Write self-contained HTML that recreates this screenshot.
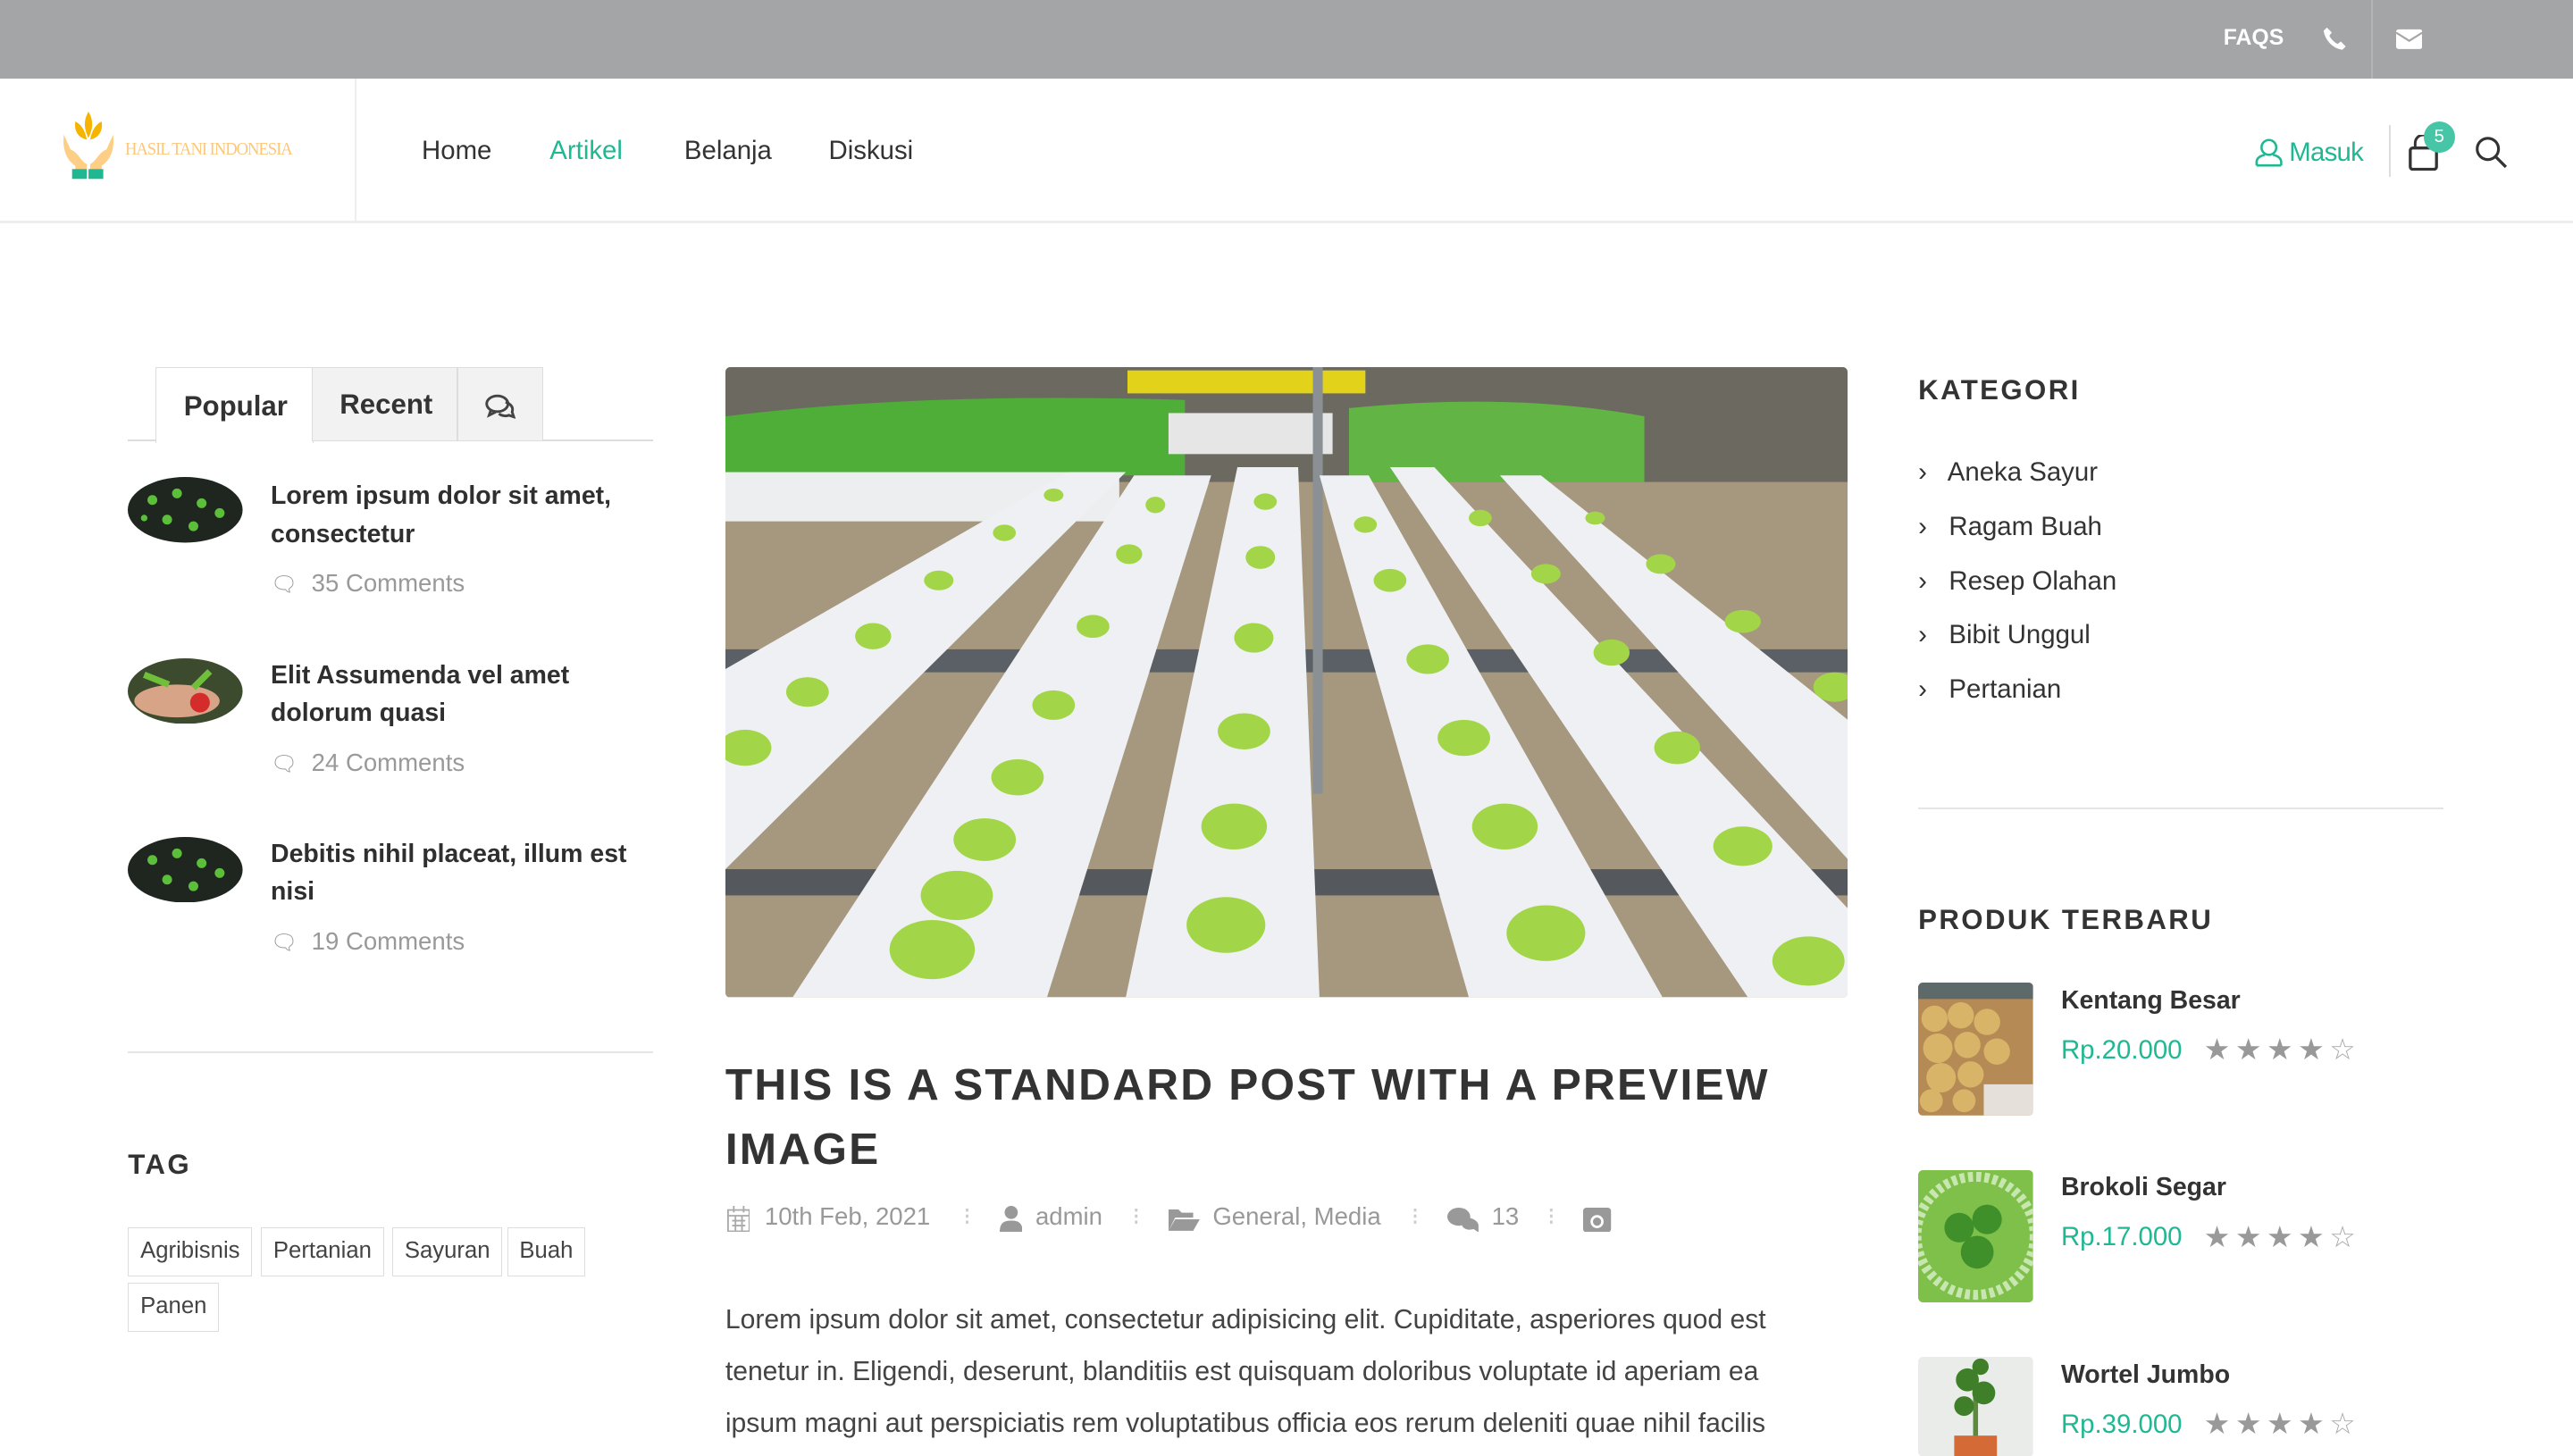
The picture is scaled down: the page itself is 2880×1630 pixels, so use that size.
<!DOCTYPE html>
<html><head><meta charset="utf-8"><style>
*{margin:0;padding:0;box-sizing:border-box}
html,body{width:2880px;height:1630px;overflow:hidden;background:#fff}
#w{zoom:1.836735;width:1568px;height:888px;position:relative;font-family:"Liberation Sans",sans-serif;color:#333}
.a{position:absolute;white-space:nowrap}
.top{left:0;top:0;width:1568px;height:48px;background:#a4a5a7}
.hd{left:0;top:48px;width:1568px;height:88px;border-bottom:2px solid #eee}
.nav{font-size:16px;color:#333;top:83px}
.grn{color:#20b893}
.t16{font-size:15.5px;font-weight:bold;color:#2f2f2f;line-height:23px;white-space:normal;width:235px}
.cm{font-size:15px;color:#999}
.h{font-size:17px;font-weight:bold;letter-spacing:1.3px;color:#333}
.cat{font-size:16px;color:#333}
.tag{border:1px solid #ddd;font-size:14px;color:#444;padding:0 7px;height:30px;line-height:28px}
.pn{font-size:15.5px;font-weight:bold;color:#333}
.pr{font-size:16px;color:#20b893}
.st{font-size:18px;color:#999;letter-spacing:3px}
.meta{font-size:15px;color:#999;top:733px}
</style></head><body><div id="w">
<div class="a top"></div>
<div class="a" style="left:1355px;top:16px;font-size:13.5px;font-weight:bold;color:#fff">FAQS</div>
<svg class="a" style="left:1415px;top:16px" width="16" height="16" viewBox="0 0 16 16"><path d="M3 1l3 3-1.5 2c1 2 3 4 5 5l2-1.5 3 3-2 2C7 14 2 9 1 3z" fill="#fff"/></svg>
<div class="a" style="left:1445px;top:0;width:1px;height:48px;background:#b3b4b6"></div>
<svg class="a" style="left:1460px;top:17px" width="16" height="14" viewBox="0 0 16 14"><rect x="0" y="1" width="16" height="12" rx="1.5" fill="#fff"/><path d="M0 3l8 5 8-5" stroke="#a4a5a7" stroke-width="1.2" fill="none"/></svg>
<div class="a hd"></div>
<div class="a" style="left:216px;top:48px;width:1px;height:88px;background:#eee"></div>
<svg class="a" style="left:36px;top:68px" width="36" height="42" viewBox="0 0 36 42"><path d="M18 0c-3 5-3 10 0 16 3-6 3-11 0-16zM10 6c-1 6 2 10 7 11-1-5-3-9-7-11zM26 6c1 6-2 10-7 11 1-5 3-9 7-11z" fill="#f4b400"/><path d="M3 14c-1 8 1 15 7 19v5h7v-6c-4-2-5-7-10-9zM33 14c1 8-1 15-7 19v5h-7v-6c4-2 5-7 10-9z" fill="#fdcf86"/><rect x="8" y="35" width="9" height="6" fill="#20b893"/><rect x="18" y="35" width="9" height="6" fill="#20b893"/></svg>
<div class="a" style="left:76px;top:85px;font-size:11px;color:#fdc77a;font-family:'Liberation Serif',serif;letter-spacing:-0.6px;transform:scaleX(0.92);transform-origin:left">HASIL TANI INDONESIA</div>
<div class="a nav" style="left:257px">Home</div>
<div class="a nav grn" style="left:335px">Artikel</div>
<div class="a nav" style="left:417px">Belanja</div>
<div class="a nav" style="left:505px">Diskusi</div>
<svg class="a" style="left:1374px;top:84px" width="17" height="18" viewBox="0 0 17 18"><circle cx="8.5" cy="6" r="4.5" fill="none" stroke="#20b893" stroke-width="1.4"/><path d="M1 17v-2c0-3 3-4 5-4.5M16 17v-2c0-3-3-4-5-4.5M1 17h15" fill="none" stroke="#20b893" stroke-width="1.4"/></svg>
<div class="a grn" style="left:1395px;top:84px;font-size:16px;letter-spacing:-0.4px">Masuk</div>
<div class="a" style="left:1456px;top:76px;width:1px;height:32px;background:#ddd"></div>
<svg class="a" style="left:1468px;top:82px" width="18" height="22" viewBox="0 0 18 22"><path d="M4 8V5a5 5 0 0 1 10 0v3" fill="none" stroke="#333" stroke-width="1.6"/><rect x="1" y="8" width="16" height="13" rx="1.5" fill="none" stroke="#333" stroke-width="1.8"/></svg>
<div class="a" style="left:1477px;top:74px;width:19px;height:19px;border-radius:50%;background:#46c6a6;color:#fff;font-size:11px;text-align:center;line-height:19px">5</div>
<svg class="a" style="left:1508px;top:83px" width="20" height="20" viewBox="0 0 20 20"><circle cx="8" cy="8" r="6.5" fill="none" stroke="#333" stroke-width="1.7"/><path d="M13 13l6 6" stroke="#333" stroke-width="1.8"/></svg>

<div class="a" style="left:78px;top:268px;width:320px;height:1px;background:#ddd"></div>
<div class="a" style="left:95px;top:224px;width:96px;height:46px;background:#fff;border:1px solid #ddd;border-bottom:none"></div>
<div class="a" style="left:190px;top:224px;width:89px;height:45px;background:#f2f2f2;border:1px solid #ddd"></div>
<div class="a" style="left:279px;top:224px;width:52px;height:45px;background:#f2f2f2;border:1px solid #ddd"></div>
<div class="a" style="left:112px;top:238px;font-size:17px;font-weight:bold;color:#333">Popular</div>
<div class="a" style="left:207px;top:237px;font-size:17px;font-weight:bold;color:#333">Recent</div>
<svg class="a" style="left:295px;top:240px" width="19" height="16" viewBox="0 0 19 16"><ellipse cx="8" cy="6" rx="6.5" ry="4.8" fill="none" stroke="#444" stroke-width="1.6"/><path d="M4 10l-1 3 4-2M13 5c3 1 5 3 4 6l1 3-3-1c-2 1-5 0-6-1" fill="none" stroke="#444" stroke-width="1.6"/></svg>

<svg class="a" style="left:78px;top:291px" width="70" height="40"><ellipse cx="35" cy="20" rx="35" ry="20" fill="#1f2620"/><g fill="#5cbf3a"><circle cx="15" cy="14" r="3"/><circle cx="30" cy="10" r="3"/><circle cx="45" cy="16" r="3"/><circle cx="24" cy="26" r="3"/><circle cx="40" cy="30" r="3"/><circle cx="56" cy="22" r="3"/><circle cx="10" cy="25" r="2"/></g></svg>
<div class="a t16" style="left:165px;top:291px">Lorem ipsum dolor sit amet, consectetur</div>
<div class="a cm" style="left:165px;top:347px"><span style="font-size:13px">🗨</span>&nbsp; 35 Comments</div>
<svg class="a" style="left:78px;top:401px" width="70" height="40"><ellipse cx="35" cy="20" rx="35" ry="20" fill="#3c4a2e"/><ellipse cx="30" cy="26" rx="26" ry="10" fill="#d8a488"/><circle cx="44" cy="27" r="6" fill="#d42b2b"/><path d="M10 10l15 6M50 8l-10 10" stroke="#6fbf3a" stroke-width="4"/></svg>
<div class="a t16" style="left:165px;top:400px">Elit Assumenda vel amet dolorum quasi</div>
<div class="a cm" style="left:165px;top:456px"><span style="font-size:13px">🗨</span>&nbsp; 24 Comments</div>
<svg class="a" style="left:78px;top:510px" width="70" height="40"><ellipse cx="35" cy="20" rx="35" ry="20" fill="#1f2620"/><g fill="#5cbf3a"><circle cx="15" cy="14" r="3"/><circle cx="30" cy="10" r="3"/><circle cx="45" cy="16" r="3"/><circle cx="24" cy="26" r="3"/><circle cx="40" cy="30" r="3"/><circle cx="56" cy="22" r="3"/></g></svg>
<div class="a t16" style="left:165px;top:509px;width:240px">Debitis nihil placeat, illum est nisi</div>
<div class="a cm" style="left:165px;top:565px"><span style="font-size:13px">🗨</span>&nbsp; 19 Comments</div>
<div class="a" style="left:78px;top:641px;width:320px;height:1px;background:#e5e5e5"></div>
<div class="a h" style="left:78px;top:700px">TAG</div>
<div class="a tag" style="left:78px;top:748px">Agribisnis</div>
<div class="a tag" style="left:159px;top:748px">Pertanian</div>
<div class="a tag" style="left:239px;top:748px">Sayuran</div>
<div class="a tag" style="left:309px;top:748px">Buah</div>
<div class="a tag" style="left:78px;top:782px">Panen</div>

<svg class="a" style="left:442px;top:224px;border-radius:3px" width="684" height="384" viewBox="0 0 684 384">
<rect width="684" height="384" fill="#a6977f"/>
<rect width="684" height="70" fill="#6c6a60"/>
<rect x="245" y="2" width="145" height="14" fill="#e2d21a"/>
<path d="M0 30Q120 15 280 20V66H0z" fill="#4fae38"/>
<path d="M380 25Q480 15 560 30V70H380z" fill="#62b544"/>
<rect x="0" y="64" width="240" height="30" fill="#eceef0"/>
<rect x="270" y="28" width="100" height="25" fill="#e6e6e6"/>
<rect x="0" y="172" width="684" height="14" fill="#5b6066"/>
<rect x="0" y="306" width="684" height="16" fill="#55595e"/>
<rect x="358" y="0" width="6" height="260" fill="#8b9095"/>
<g fill="#eef0f3">
<path d="M0 184L209 64H244L0 306z"/>
<path d="M41 384H196L296 66H249z"/>
<path d="M244 384H362L349 61H312z"/>
<path d="M453 384H571L392 66H362z"/>
<path d="M623 384H684V330L432 61H405z"/>
<path d="M684 215L497 66H472L684 300z"/>
</g>
<g fill="#a2d648">
<ellipse cx="126" cy="355" rx="26" ry="18"/><ellipse cx="141" cy="322" rx="22" ry="15"/><ellipse cx="158" cy="288" rx="19" ry="13"/><ellipse cx="178" cy="250" rx="16" ry="11"/><ellipse cx="200" cy="206" rx="13" ry="9"/><ellipse cx="224" cy="158" rx="10" ry="7"/><ellipse cx="246" cy="114" rx="8" ry="6"/><ellipse cx="262" cy="84" rx="6" ry="5"/>
<ellipse cx="305" cy="340" rx="24" ry="17"/><ellipse cx="310" cy="280" rx="20" ry="14"/><ellipse cx="316" cy="222" rx="16" ry="11"/><ellipse cx="322" cy="165" rx="12" ry="9"/><ellipse cx="326" cy="116" rx="9" ry="7"/><ellipse cx="329" cy="82" rx="7" ry="5"/>
<ellipse cx="500" cy="345" rx="24" ry="17"/><ellipse cx="475" cy="280" rx="20" ry="14"/><ellipse cx="450" cy="226" rx="16" ry="11"/><ellipse cx="428" cy="178" rx="13" ry="9"/><ellipse cx="405" cy="130" rx="10" ry="7"/><ellipse cx="390" cy="96" rx="7" ry="5"/>
<ellipse cx="12" cy="232" rx="16" ry="11"/><ellipse cx="50" cy="198" rx="13" ry="9"/><ellipse cx="90" cy="164" rx="11" ry="8"/><ellipse cx="130" cy="130" rx="9" ry="6"/><ellipse cx="170" cy="101" rx="7" ry="5"/><ellipse cx="200" cy="78" rx="6" ry="4"/>
<ellipse cx="660" cy="362" rx="22" ry="15"/><ellipse cx="620" cy="292" rx="18" ry="12"/><ellipse cx="580" cy="232" rx="14" ry="10"/><ellipse cx="540" cy="174" rx="11" ry="8"/><ellipse cx="500" cy="126" rx="9" ry="6"/><ellipse cx="460" cy="92" rx="7" ry="5"/>
<ellipse cx="676" cy="195" rx="13" ry="9"/><ellipse cx="620" cy="155" rx="11" ry="7"/><ellipse cx="570" cy="120" rx="9" ry="6"/><ellipse cx="530" cy="92" rx="6" ry="4"/>
</g>
</svg>

<div class="a" style="left:442px;top:642px;font-size:27px;font-weight:bold;color:#333;letter-spacing:1.2px;line-height:39px;white-space:normal;width:700px">THIS IS A STANDARD POST WITH A PREVIEW IMAGE</div>
<svg class="a" style="left:443px;top:735px" width="14" height="16" viewBox="0 0 14 16"><rect x="0.5" y="2.5" width="13" height="13" fill="none" stroke="#aaa"/><path d="M0 6h14M4 0v4M10 0v4M3 9h8M3 12h8M5 6v10M9 6v10" stroke="#aaa"/></svg>
<div class="a meta" style="left:466px">10th Feb, 2021</div>
<div class="a meta" style="left:587px;color:#ccc">⁝</div>
<svg class="a" style="left:609px;top:735px" width="14" height="16" viewBox="0 0 14 16"><circle cx="7" cy="4" r="4" fill="#999"/><path d="M0 16c0-6 3-7 7-7s7 1 7 7z" fill="#999"/></svg>
<div class="a meta" style="left:631px">admin</div>
<div class="a meta" style="left:690px;color:#ccc">⁝</div>
<svg class="a" style="left:712px;top:737px" width="19" height="13" viewBox="0 0 19 13"><path d="M0 0h6l2 2h7v3H4L0 13z M4 6h15l-4 7H0z" fill="#999"/></svg>
<div class="a meta" style="left:739px">General, Media</div>
<div class="a meta" style="left:860px;color:#ccc">⁝</div>
<svg class="a" style="left:882px;top:736px" width="19" height="15" viewBox="0 0 19 15"><ellipse cx="7" cy="5.5" rx="7" ry="5.5" fill="#999"/><path d="M11 6c4 0 8 2 8 5l0 4-3-2c-3 1-6 0-7-2z" fill="#999"/></svg>
<div class="a meta" style="left:909px">13</div>
<div class="a meta" style="left:943px;color:#ccc">⁝</div>
<svg class="a" style="left:965px;top:736px" width="17" height="15" viewBox="0 0 17 15"><rect width="17" height="15" rx="2" fill="#999"/><circle cx="8.5" cy="8.5" r="4" fill="#fff"/><circle cx="8.5" cy="8.5" r="2.5" fill="#999"/></svg>
<div class="a" style="left:442px;top:789px;width:672px;white-space:normal;font-size:16.4px;line-height:31.5px;color:#444">Lorem ipsum dolor sit amet, consectetur adipisicing elit. Cupiditate, asperiores quod est tenetur in. Eligendi, deserunt, blanditiis est quisquam doloribus voluptate id aperiam ea ipsum magni aut perspiciatis rem voluptatibus officia eos rerum deleniti quae nihil facilis</div>

<div class="a h" style="left:1169px;top:228px">KATEGORI</div>
<div class="a cat" style="left:1169px;top:279px">›&nbsp;&nbsp; Aneka Sayur</div>
<div class="a cat" style="left:1169px;top:312px">›&nbsp;&nbsp; Ragam Buah</div>
<div class="a cat" style="left:1169px;top:345px">›&nbsp;&nbsp; Resep Olahan</div>
<div class="a cat" style="left:1169px;top:378px">›&nbsp;&nbsp; Bibit Unggul</div>
<div class="a cat" style="left:1169px;top:411px">›&nbsp;&nbsp; Pertanian</div>
<div class="a" style="left:1169px;top:492px;width:320px;height:1px;background:#e5e5e5"></div>
<div class="a h" style="left:1169px;top:551px">PRODUK TERBARU</div>

<svg class="a" style="left:1169px;top:599px;border-radius:3px" width="70" height="81"><rect width="70" height="81" fill="#b58a55"/><rect width="70" height="10" fill="#5e6a6a"/><g fill="#d8b468"><circle cx="10" cy="22" r="8"/><circle cx="26" cy="20" r="8"/><circle cx="42" cy="24" r="8"/><circle cx="12" cy="40" r="9"/><circle cx="30" cy="38" r="8"/><circle cx="48" cy="42" r="8"/><circle cx="14" cy="58" r="9"/><circle cx="32" cy="56" r="8"/><circle cx="8" cy="72" r="7"/><circle cx="28" cy="72" r="7"/></g><rect x="40" y="62" width="30" height="19" fill="#e6e0da"/></svg>
<div class="a pn" style="left:1256px;top:601px">Kentang Besar</div>
<div class="a pr" style="left:1256px;top:631px">Rp.20.000</div>
<div class="a st" style="left:1343px;top:629px">★★★★<span style="color:#aaa">☆</span></div>

<svg class="a" style="left:1169px;top:713px;border-radius:3px" width="70" height="81"><rect width="70" height="81" fill="#7ec04a"/><circle cx="35" cy="40" r="36" fill="none" stroke="#c8e6b0" stroke-width="6" stroke-dasharray="3 2"/><g fill="#3f8f2a"><circle cx="25" cy="35" r="9"/><circle cx="42" cy="30" r="9"/><circle cx="36" cy="50" r="10"/></g></svg>
<div class="a pn" style="left:1256px;top:715px">Brokoli Segar</div>
<div class="a pr" style="left:1256px;top:745px">Rp.17.000</div>
<div class="a st" style="left:1343px;top:743px">★★★★<span style="color:#aaa">☆</span></div>

<svg class="a" style="left:1169px;top:827px;border-radius:3px" width="70" height="61"><rect width="70" height="61" fill="#e9ece8"/><path d="M35 61V20" stroke="#5a8a3a" stroke-width="3"/><g fill="#3f7f2a"><circle cx="30" cy="14" r="7"/><circle cx="40" cy="22" r="7"/><circle cx="28" cy="30" r="6"/><circle cx="38" cy="6" r="5"/></g><rect x="22" y="48" width="26" height="13" fill="#d46a35"/></svg>
<div class="a pn" style="left:1256px;top:829px">Wortel Jumbo</div>
<div class="a pr" style="left:1256px;top:859px">Rp.39.000</div>
<div class="a st" style="left:1343px;top:857px">★★★★<span style="color:#aaa">☆</span></div>
</div></body></html>
